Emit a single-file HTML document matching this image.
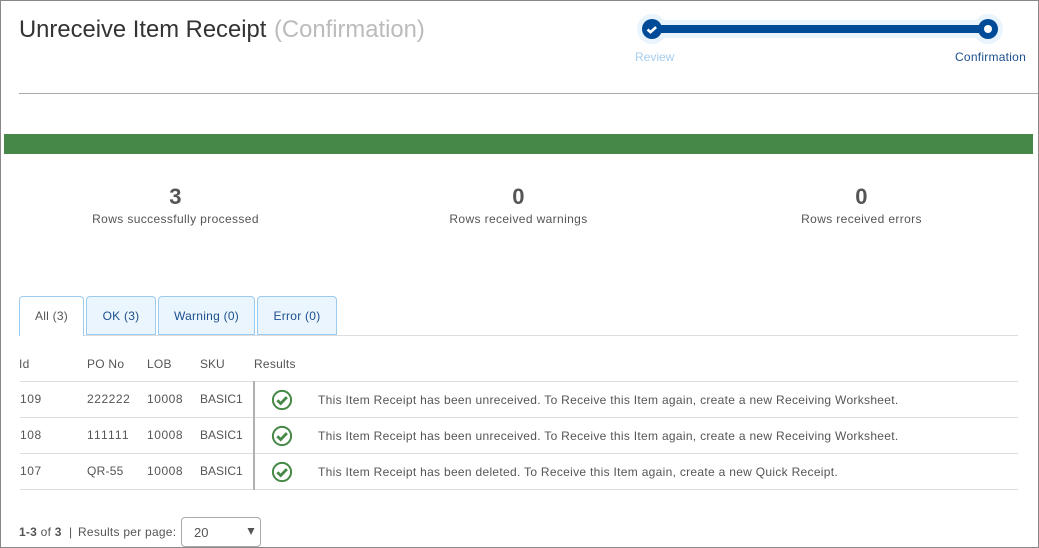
<!DOCTYPE html>
<html>
<head>
<meta charset="utf-8">
<style>
html,body{margin:0;padding:0;background:#fff;}
body{width:1039px;height:548px;position:relative;overflow:hidden;font-family:"Liberation Sans",Arial,sans-serif;font-size:12px;color:#555;letter-spacing:.25px;}
.t{position:absolute;white-space:nowrap;line-height:16px;}
.b{position:absolute;}
.h{background:#ddd;height:1px;left:20px;width:998px;}
.n{letter-spacing:.55px;}
.m{letter-spacing:.3px;}
.c{letter-spacing:.37px;text-align:center;}
.tab{position:absolute;top:296px;height:39px;box-sizing:border-box;border:1px solid #9ccbee;border-radius:4px 4px 0 0;background:#ebf5fd;color:#1c4f8c;text-align:center;line-height:38px;font-size:12px;}
</style>
</head>
<body>
<div class="b" style="left:0;top:0;width:1039px;height:548px;box-sizing:border-box;border:1px solid #888;"></div>

<div class="t" style="left:19px;top:16px;font-size:23.8px;line-height:28px;color:#333;letter-spacing:0;">Unreceive Item Receipt<span style="color:#bbb;position:absolute;left:255px;top:0;">(Confirmation)</span></div>

<svg class="b" style="left:630px;top:10px;" width="380" height="40" viewBox="630 10 380 40">
<rect x="652" y="20" width="336" height="18" fill="#e9f4fd"/>
<circle cx="652" cy="29" r="15" fill="#e9f4fd"/>
<circle cx="988" cy="29" r="15" fill="#e9f4fd"/>
<rect x="652" y="25" width="336" height="8" fill="#004b98"/>
<circle cx="652" cy="29" r="10" fill="#004b98"/>
<circle cx="988" cy="29" r="10" fill="#004b98"/>
<circle cx="988" cy="29" r="4" fill="#fff"/>
<path d="M647.5 29.5l3 2.6 5.6-5" fill="none" stroke="#fff" stroke-width="2.6"/>
</svg>
<div class="t" style="left:635px;top:49px;color:#a4cdee;letter-spacing:0;">Review</div>
<div class="t" style="left:955px;top:49px;color:#1c4f8c;">Confirmation</div>

<div class="b" style="left:19px;top:93px;width:1019px;height:1px;background:#aaa;"></div>
<div class="b" style="left:4px;top:134px;width:1029px;height:20px;background:#468847;"></div>

<div class="t" style="left:0;width:351px;top:185px;text-align:center;font-size:22px;line-height:24px;font-weight:bold;">3</div>
<div class="t c" style="left:0;width:351px;top:211px;">Rows successfully processed</div>
<div class="t" style="left:343px;width:351px;top:185px;text-align:center;font-size:22px;line-height:24px;font-weight:bold;">0</div>
<div class="t c" style="left:343px;width:351px;top:211px;">Rows received warnings</div>
<div class="t" style="left:686px;width:351px;top:185px;text-align:center;font-size:22px;line-height:24px;font-weight:bold;">0</div>
<div class="t c" style="left:686px;width:351px;top:211px;">Rows received errors</div>

<div class="b" style="left:19px;top:335px;width:999px;height:1px;background:#ddd;"></div>
<div class="tab" style="left:19px;width:65px;height:40px;background:#fff;border-bottom:0;color:#555;">All (3)</div>
<div class="tab" style="left:86px;width:70px;">OK (3)</div>
<div class="tab" style="left:158px;width:97px;">Warning (0)</div>
<div class="tab" style="left:257px;width:80px;">Error (0)</div>

<div class="t" style="left:19px;top:356px;">Id</div>
<div class="t" style="left:87px;top:356px;">PO No</div>
<div class="t" style="left:147px;top:356px;">LOB</div>
<div class="t" style="left:200px;top:356px;letter-spacing:0;">SKU</div>
<div class="t" style="left:254px;top:356px;">Results</div>

<div class="b h" style="top:381px;"></div>
<div class="b h" style="top:417px;"></div>
<div class="b h" style="top:453px;"></div>
<div class="b h" style="top:489px;"></div>
<div class="b" style="left:253px;top:381px;width:2px;height:109px;background:#b0b0b0;"></div>

<div class="t n" style="left:20px;top:391px;">109</div>
<div class="t n" style="left:87px;top:391px;">222222</div>
<div class="t n" style="left:147px;top:391px;">10008</div>
<div class="t" style="left:200px;top:391px;letter-spacing:0;">BASIC1</div>
<div class="t m" style="left:318px;top:392px;">This Item Receipt has been unreceived. To Receive this Item again, create a new Receiving Worksheet.</div>

<div class="t n" style="left:20px;top:427px;">108</div>
<div class="t" style="left:87px;top:427px;letter-spacing:1.2px;">111111</div>
<div class="t n" style="left:147px;top:427px;">10008</div>
<div class="t" style="left:200px;top:427px;letter-spacing:0;">BASIC1</div>
<div class="t m" style="left:318px;top:428px;">This Item Receipt has been unreceived. To Receive this Item again, create a new Receiving Worksheet.</div>

<div class="t n" style="left:20px;top:463px;">107</div>
<div class="t" style="left:87px;top:463px;">QR-55</div>
<div class="t n" style="left:147px;top:463px;">10008</div>
<div class="t" style="left:200px;top:463px;letter-spacing:0;">BASIC1</div>
<div class="t m" style="left:318px;top:464px;">This Item Receipt has been deleted. To Receive this Item again, create a new Quick Receipt.</div>

<svg class="b" style="left:271px;top:389px;" width="22" height="22" viewBox="0 0 22 22"><circle cx="11" cy="11" r="9.1" fill="none" stroke="#468847" stroke-width="2"/><path d="M6.3 11.2l3.4 3.3 6.2-6.4" fill="none" stroke="#468847" stroke-width="2.8"/></svg>
<svg class="b" style="left:271px;top:425px;" width="22" height="22" viewBox="0 0 22 22"><circle cx="11" cy="11" r="9.1" fill="none" stroke="#468847" stroke-width="2"/><path d="M6.3 11.2l3.4 3.3 6.2-6.4" fill="none" stroke="#468847" stroke-width="2.8"/></svg>
<svg class="b" style="left:271px;top:461px;" width="22" height="22" viewBox="0 0 22 22"><circle cx="11" cy="11" r="9.1" fill="none" stroke="#468847" stroke-width="2"/><path d="M6.3 11.2l3.4 3.3 6.2-6.4" fill="none" stroke="#468847" stroke-width="2.8"/></svg>

<div class="t" style="left:19px;top:524px;"><b>1-3</b> of <b>3</b></div>
<div class="t" style="left:69px;top:524px;">|</div>
<div class="t" style="left:78px;top:524px;">Results per page:</div>
<div class="b" style="left:181px;top:517px;width:80px;height:30px;box-sizing:border-box;border:1px solid #aaa;border-radius:4px;background:#fff;"></div>
<div class="t" style="left:194px;top:525px;font-size:13px;letter-spacing:0;">20</div>
<svg class="b" style="left:247px;top:528px;" width="8" height="8" viewBox="0 0 8 8"><path d="M.5 0h7L4 7z" fill="#555"/></svg>
</body>
</html>
